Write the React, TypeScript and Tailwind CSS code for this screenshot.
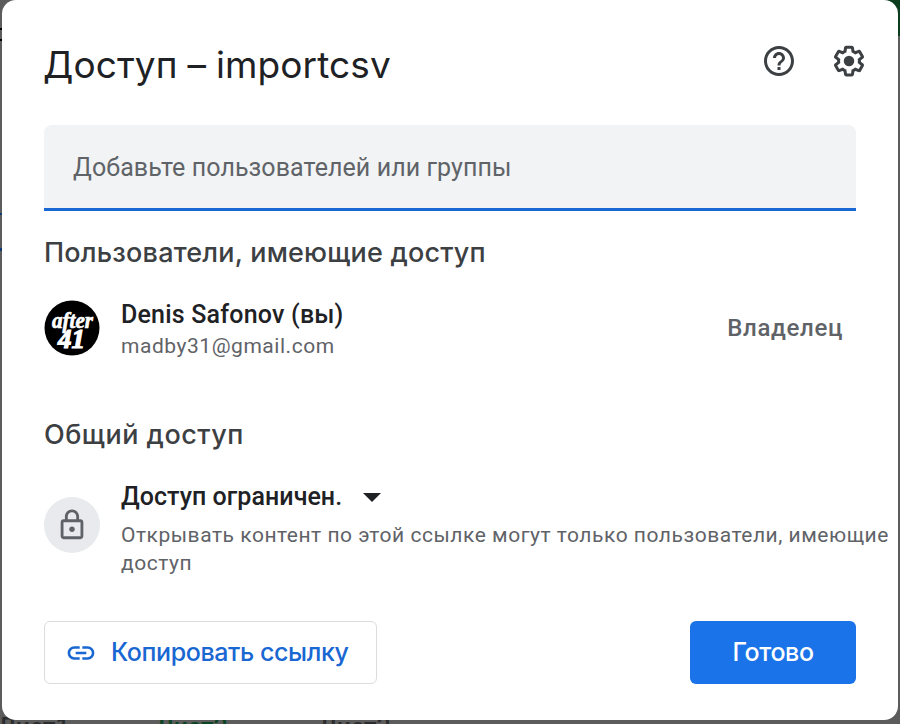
import React from "react";

function HelpIcon() {
  return (
    <svg width="36" height="36" viewBox="0 0 24 24" fill="#3c4043">
      <path d="M11 18h2v-2h-2v2zm1-16C6.48 2 2 6.48 2 12s4.48 10 10 10 10-4.480 10-10S17.520 2 12 2zm0 18c-4.410 0-8-3.590-8-8s3.590-8 8-8 8 3.590 8 8-3.590 8-8 8zm0-14c-2.210 0-4 1.790-4 4h2c0-1.100.9-2 2-2s2 .9 2 2c0 2-3 1.750-3 5h2c0-2.250 3-2.500 3-5 0-2.210-1.790-4-4-4z" />
    </svg>
  );
}

function GearIcon() {
  return (
    <svg width="36" height="36" viewBox="0 0 24 24" fill="#3c4043">
      <path d="M13.850 22.250h-3.700c-.74 0-1.360-.54-1.450-1.270l-.27-1.890c-.27-.14-.53-.29-.79-.46l-1.800.72c-.7.260-1.470-.03-1.810-.65L2.200 15.530c-.35-.66-.2-1.440.36-1.880l1.530-1.190c-.01-.15-.02-.3-.02-.46 0-.15.010-.31.020-.46l-1.520-1.190c-.59-.45-.74-1.260-.37-1.880l1.850-3.190c.34-.62 1.110-.9 1.790-.63l1.810.73c.26-.17.520-.32.780-.46l.27-1.910c.09-.7.710-1.250 1.440-1.250h3.700c.74 0 1.360.54 1.450 1.270l.27 1.890c.27.14.530.29.790.46l1.800-.72c.71-.26 1.480.03 1.820.65l1.840 3.180c.36.66.2 1.440-.36 1.880l-1.520 1.190c.01.15.020.3.020.46s-.01.31-.02.46l1.520 1.190c.56.45.720 1.230.370 1.860l-1.860 3.220c-.34.62-1.110.9-1.800.63l-1.800-.72c-.26.17-.52.32-.78.46l-.27 1.910c-.1.680-.72 1.220-1.460 1.220zm-3.230-2h2.760l.37-2.550.53-.22c.44-.18.880-.44 1.340-.78l.45-.34 2.380.96 1.380-2.400-2.030-1.580.07-.56c.03-.26.060-.51.060-.78s-.03-.53-.06-.78l-.07-.56 2.030-1.580-1.390-2.400-2.390.96-.45-.35c-.42-.32-.87-.58-1.330-.77l-.52-.22-.37-2.550h-2.760l-.37 2.550-.53.210c-.44.190-.88.440-1.340.79l-.45.330-2.380-.95-1.390 2.390 2.030 1.580-.07.560a7 7 0 0 0-.06.790c0 .26.020.53.060.78l.07.56-2.030 1.580 1.380 2.400 2.390-.96.450.35c.43.330.86.580 1.330.77l.53.220.38 2.550z" />
      <circle cx="12" cy="12" r="3.500" />
    </svg>
  );
}

function LockIcon() {
  return (
    <svg width="34" height="34" viewBox="0 0 24 24" fill="#5f6368">
      <path d="M18 8h-1V6c0-2.760-2.240-5-5-5S7 3.240 7 6v2H6c-1.100 0-2 .9-2 2v10c0 1.100.9 2 2 2h12c1.100 0 2-.9 2-2V10c0-1.100-.9-2-2-2zM9 6c0-1.660 1.340-3 3-3s3 1.340 3 3v2H9V6zm9 14H6V10h12v10zm-6-3c1.100 0 2-.9 2-2s-.9-2-2-2-2 .9-2 2 .9 2 2 2z" />
    </svg>
  );
}

function LinkIcon() {
  return (
    <svg width="32" height="32" viewBox="0 0 24 24" fill="#1967d2">
      <path d="M3.900 12c0-1.710 1.390-3.100 3.100-3.100h4V7H7c-2.760 0-5 2.240-5 5s2.240 5 5 5h4v-1.900H7c-1.710 0-3.100-1.390-3.100-3.100zM8 13h8v-2H8v2zm9-6h-4v1.900h4c1.710 0 3.100 1.390 3.100 3.100s-1.390 3.100-3.100 3.100h-4V17h4c2.760 0 5-2.240 5-5s-2.240-5-5-5z" />
    </svg>
  );
}

function Avatar() {
  return (
    <svg width="56" height="56" viewBox="0 0 56 56" fill="#fff" className="relative -top-px">
      <circle cx="28" cy="28" r="27.500" fill="#000" />
      <g className="font-['Liberation_Serif',serif] font-bold italic" stroke="#fff" strokeWidth="0.7">
        <text x="8" y="28" fontSize="23" textLength="41" lengthAdjust="spacingAndGlyphs">after</text>
        <text x="14" y="48" fontSize="28" strokeWidth="1.2" textLength="27" lengthAdjust="spacingAndGlyphs">41</text>
      </g>
    </svg>
  );
}

/** Sheet edges that stay visible around the dialog. */
function Backdrop() {
  return (
    <div className="absolute inset-0 overflow-hidden bg-[#5c5c5c] font-[Roboto,sans-serif] text-[25px] leading-[24px] font-medium">
      <div className="absolute right-0 top-0 h-9 w-8 bg-[#0b3d1e]" />
      <div className="absolute left-0 top-[28px] h-[2px] w-[2px] bg-black" />
      <div className="absolute left-0 top-[39px] h-[2px] w-[2px] bg-black" />
      <div className="absolute left-0 top-[213px] h-[2px] w-[2px] bg-[#0d3a75]" />
      <div className="absolute left-0 top-[248px] h-[3px] w-[2px] bg-[#0d3a75]" />
      <span className="absolute -left-[2px] top-[716px] text-[#2b2c2e]">Лист1</span>
      <span className="absolute left-[156px] top-[716px] text-[#0b4524]">Лист2</span>
      <span className="absolute left-[319px] top-[716px] text-[#2b2c2e]">Лист3</span>
    </div>
  );
}

export default function App() {
  return (
    <div className="relative h-[724px] w-[900px] overflow-hidden px-[2px] font-[Roboto,sans-serif] whitespace-nowrap">
      <Backdrop />
      <main className="relative flex h-[720px] flex-col rounded-[14px] bg-white px-[42px]">
        <header className="mt-[41px] flex h-[48px] items-center justify-between">
          <h1 className="-ml-px font-[Inter,sans-serif] text-[37px] leading-[48px] tracking-[0.1px] [word-spacing:-0.6px] text-[#202124]">Доступ – importcsv</h1>
          <div className="-mr-[11px] -mt-[8px] flex gap-[34px]">
            <HelpIcon />
            <GearIcon />
          </div>
        </header>

        <div className="mt-[36px] flex h-[86px] items-center rounded-t-[8px] border-b-[3px] border-[#1967d2] bg-[#f1f3f4] pl-[29px] pt-[2px] text-[25px] tracking-[0.08px] text-[#5f6368]">
          Добавьте пользователей или группы
        </div>

        <h2 className="mt-[25px] font-[Inter,sans-serif] text-[27px] leading-[34px] font-medium tracking-[0.19px] text-[#3c4043]">Пользователи, имеющие доступ</h2>

        <section className="mt-[30px] flex h-[58px] items-center">
          <Avatar />
          <div className="ml-[21px] flex-1 pt-[2px]">
            <p className="text-[25px] leading-[32px] font-medium tracking-[0.2px] text-[#202124]">Denis Safonov (вы)</p>
            <p className="text-[21px] leading-[30px] tracking-[0.54px] text-[#5f6368]">madby31@gmail.com</p>
          </div>
          <span className="relative -top-px mr-[13px] text-[24px] font-medium tracking-[0.65px] text-[#5f6368]">Владелец</span>
        </section>

        <h2 className="mt-[60px] font-[Inter,sans-serif] text-[27px] leading-[34px] font-medium tracking-[0.5px] text-[#3c4043]">Общий доступ</h2>

        <section className="mt-[28px] flex h-[98px]">
          <div className="mt-[17px] flex size-[56px] shrink-0 items-center justify-center rounded-full bg-[#e8eaed]">
            <LockIcon />
          </div>
          <div className="ml-[21px] w-[770px] shrink-0">
            <div className="flex h-[36px] items-center text-[25px] font-medium tracking-[0.05px] text-[#202124]">
              <span className="pb-[2px]">Доступ ограничен.</span>
              <svg className="ml-[21px]" width="18" height="10" viewBox="0 0 18 10" fill="#202124"><path d="M0 0h18L9 9z" /></svg>
            </div>
            <p className="mt-[5px] text-[21px] leading-[28px] tracking-[0.525px] text-[#5f6368]">
              Открывать контент по этой ссылке могут только пользователи, имеющие<br />доступ
            </p>
          </div>
        </section>

        <footer className="mt-[43px] flex justify-between font-[Inter,sans-serif] text-[25px]">
          <button className="flex h-[63px] w-[333px] items-center rounded-[6px] border border-[#dadce0] pl-[20px] font-medium tracking-[-0.4px] text-[#1967d2]">
            <LinkIcon />
            <span className="ml-[14px]">Копировать ссылку</span>
          </button>
          <button className="h-[63px] w-[166px] rounded-[6px] bg-[#1a73e8] pt-px font-medium tracking-[-0.4px] text-white">Готово</button>
        </footer>
      </main>
    </div>
  );
}
